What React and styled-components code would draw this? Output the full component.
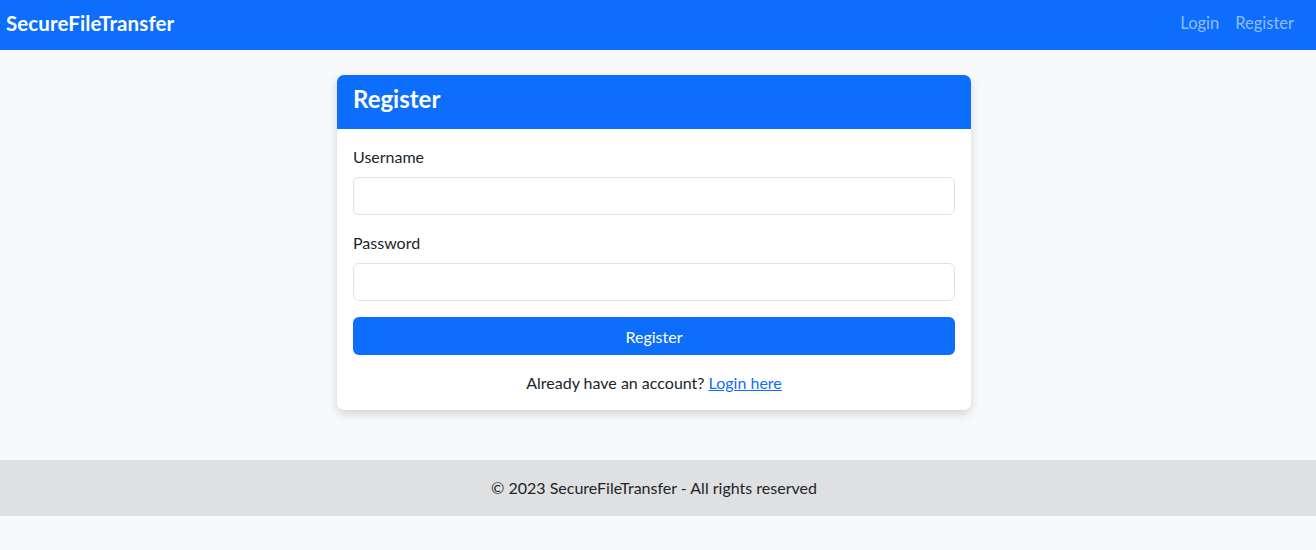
import React from "react";
import styled, { createGlobalStyle } from "styled-components";

const Global = createGlobalStyle`
  html, body { margin: 0; padding: 0; }
  body {
    font-family: Lato, "Noto Sans", sans-serif;
    font-size: 16px;
    line-height: 1.5;
    color: #212529;
    background: #f8f9fa;
  }
  * { box-sizing: border-box; }
`;

const Page = styled.div`
  min-height: 550px;
  display: flex;
  flex-direction: column;
  background: #f8f9fa;
`;

const Navbar = styled.nav`
  height: 50px;
  background: #0d6efd;
  display: flex;
  align-items: center;
  justify-content: space-between;
  padding: 0 14px 3px 6px;
`;

const Brand = styled.a`
  color: #fff;
  font-size: 20.5px;
  font-weight: 700;
  text-decoration: none;
  letter-spacing: 0.1px;
`;

const NavLinks = styled.div`
  display: flex;
  align-items: center;
`;

const NavLink = styled.a`
  color: rgba(255, 255, 255, 0.55);
  font-size: 16.5px;
  text-decoration: none;
  padding: 8px 8px;
`;

const Main = styled.main`
  display: flex;
  justify-content: center;
  padding: 25px 8px 50px 0;
`;

const Card = styled.div`
  width: 634px;
  background: #fff;
  border-radius: 7px;
  box-shadow: 0 0.25rem 0.6rem rgba(0, 0, 0, 0.15);
  overflow: hidden;
`;

const CardHeader = styled.div`
  height: 54px;
  background: #0d6efd;
  color: #fff;
  display: flex;
  align-items: center;
  padding: 0 16px 5px;
`;

const Title = styled.h3`
  margin: 0;
  font-size: 24px;
  font-weight: 700;
  line-height: 1.2;
`;

const CardBody = styled.div`
  padding: 16px 16px 15px;
`;

const Field = styled.div`
  margin-bottom: 16px;
`;

const Label = styled.label`
  display: block;
  margin-bottom: 8px;
  font-size: 16px;
`;

const Input = styled.input`
  display: block;
  width: 100%;
  height: 38px;
  border: 1px solid #dee2e6;
  border-radius: 6px;
  padding: 6px 12px;
  font-size: 16px;
  font-family: inherit;
  background: #fff;
`;

const Button = styled.button`
  display: block;
  width: 100%;
  height: 38px;
  border: none;
  border-radius: 6px;
  background: #0d6efd;
  color: #fff;
  font-family: inherit;
  font-size: 16px;
  cursor: pointer;
`;

const Footnote = styled.p`
  margin: 16px 0 0;
  text-align: center;
  font-size: 16px;
`;

const Link = styled.a`
  color: #0d6efd;
  text-decoration: underline;
`;

const Footer = styled.footer`
  height: 56px;
  background: #dfe0e2;
  display: flex;
  align-items: center;
  justify-content: center;
  padding: 0 8px 1px 0;
  font-size: 16px;
`;

export default function App() {
  return (
    <>
      <Global />
      <Page>
        <Navbar>
          <Brand href="#">SecureFileTransfer</Brand>
          <NavLinks>
            <NavLink href="#">Login</NavLink>
            <NavLink href="#">Register</NavLink>
          </NavLinks>
        </Navbar>
        <Main>
          <Card>
            <CardHeader>
              <Title>Register</Title>
            </CardHeader>
            <CardBody>
              <Field>
                <Label>Username</Label>
                <Input type="text" />
              </Field>
              <Field>
                <Label>Password</Label>
                <Input type="password" />
              </Field>
              <Button>Register</Button>
              <Footnote>
                Already have an account? <Link href="#">Login here</Link>
              </Footnote>
            </CardBody>
          </Card>
        </Main>
        <Footer>© 2023 SecureFileTransfer - All rights reserved</Footer>
      </Page>
    </>
  );
}
